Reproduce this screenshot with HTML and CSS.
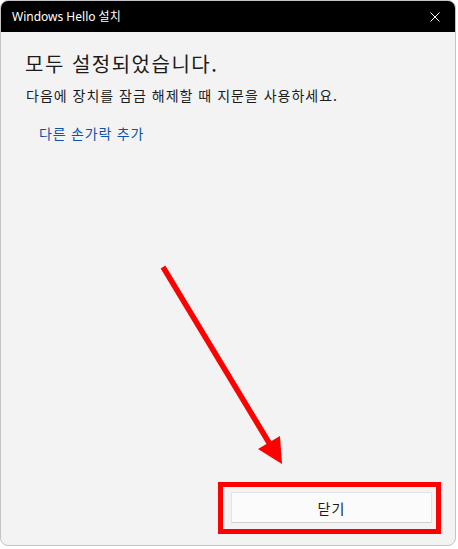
FILE: index.html
```html
<!DOCTYPE html>
<html lang="ko">
<head>
<meta charset="utf-8">
<title>Windows Hello 설치</title>
<link rel="stylesheet" href="styles.css">
</head>
<body>
<div class="window">
  <div class="titlebar">
    <span class="title">Windows Hello 설치</span>
    <svg class="close" width="10" height="10" viewBox="0 0 10 10"><path d="M0.5 0.5 L9.5 9.5 M9.5 0.5 L0.5 9.5" stroke="#fff" stroke-width="1" fill="none"/></svg>
  </div>
  <div class="content">
    <h1 class="heading">모두 설정되었습니다.</h1>
    <p class="desc">다음에 장치를 잠금 해제할 때 지문을 사용하세요.</p>
    <a class="link" href="#">다른 손가락 추가</a>
    <div class="footer">
      <button class="btn">닫기</button>
    </div>
  </div>
</div>
<div class="highlight"></div>
<svg class="arrow" width="458" height="549" viewBox="0 0 458 549">
  <line x1="163" y1="267" x2="271" y2="446" stroke="#ff0000" stroke-width="5.5"/>
  <polygon points="258,449 280,436 282,464" fill="#ff0000"/>
</svg>
</body>
</html>
```
FILE: styles.css
```css
html, body {
  margin: 0;
  padding: 0;
  background: #ffffff;
  font-family: "Noto Sans", "Noto Sans CJK KR", sans-serif;
  overflow: hidden;
}
body {
  width: 458px;
  height: 549px;
  position: relative;
}
.window {
  width: 456px;
  height: 546px;
  box-sizing: border-box;
  border: 1px solid #c4c4c4;
  border-radius: 8px;
  background: #f3f3f3;
  overflow: hidden;
  display: flex;
  flex-direction: column;
  position: relative;
  z-index: 1;
}
.titlebar {
  height: 32px;
  flex: none;
  background: #000000;
  display: flex;
  align-items: center;
  justify-content: space-between;
  padding: 0 16px 0 12px;
  margin: -1px -1px 0 -1px;
}
.title {
  color: #ffffff;
  font-size: 12px;
  font-family: "Noto Sans", "Noto Sans CJK KR", sans-serif;
  line-height: 16px;
  padding-top: 1px;
}
.close {
  display: block;
  margin-top: 1px;
}
.content {
  flex: 1;
  display: flex;
  flex-direction: column;
  padding: 18px 23px 22px 24px;
}
.heading {
  margin: 0;
  font-size: 20px;
  line-height: 28px;
  font-weight: 400;
  color: #1b1b1b;
  letter-spacing: 1.5px;
  font-family: "Noto Sans CJK KR", sans-serif;
}
.desc {
  margin: 7px 0 0 1px;
  font-size: 14px;
  line-height: 20px;
  color: #1b1b1b;
  letter-spacing: 1px;
  font-family: "Noto Sans CJK KR", sans-serif;
}
.link {
  margin: 18px 0 0 14px;
  font-size: 14px;
  line-height: 20px;
  color: #0d54a8;
  text-decoration: none;
  letter-spacing: 0.8px;
  font-family: "Noto Sans CJK KR", sans-serif;
  align-self: flex-start;
}
.footer {
  margin-top: auto;
  display: flex;
  justify-content: flex-end;
}
.btn {
  width: 201px;
  height: 31px;
  box-sizing: border-box;
  background: #fbfbfb;
  border: 1px solid #e3e3e3;
  border-bottom-color: #d2d2d2;
  border-radius: 1px;
  font-size: 14px;
  color: #1b1b1b;
  letter-spacing: 1px;
  font-family: "Noto Sans CJK KR", sans-serif;
  padding: 0;
  margin: 0;
}
.highlight {
  position: absolute;
  left: 218px;
  top: 482px;
  width: 223px;
  height: 52px;
  box-sizing: border-box;
  border: 5px solid #ff0000;
  z-index: 2;
}
.arrow {
  position: absolute;
  left: 0;
  top: 0;
  z-index: 2;
  pointer-events: none;
}
```
